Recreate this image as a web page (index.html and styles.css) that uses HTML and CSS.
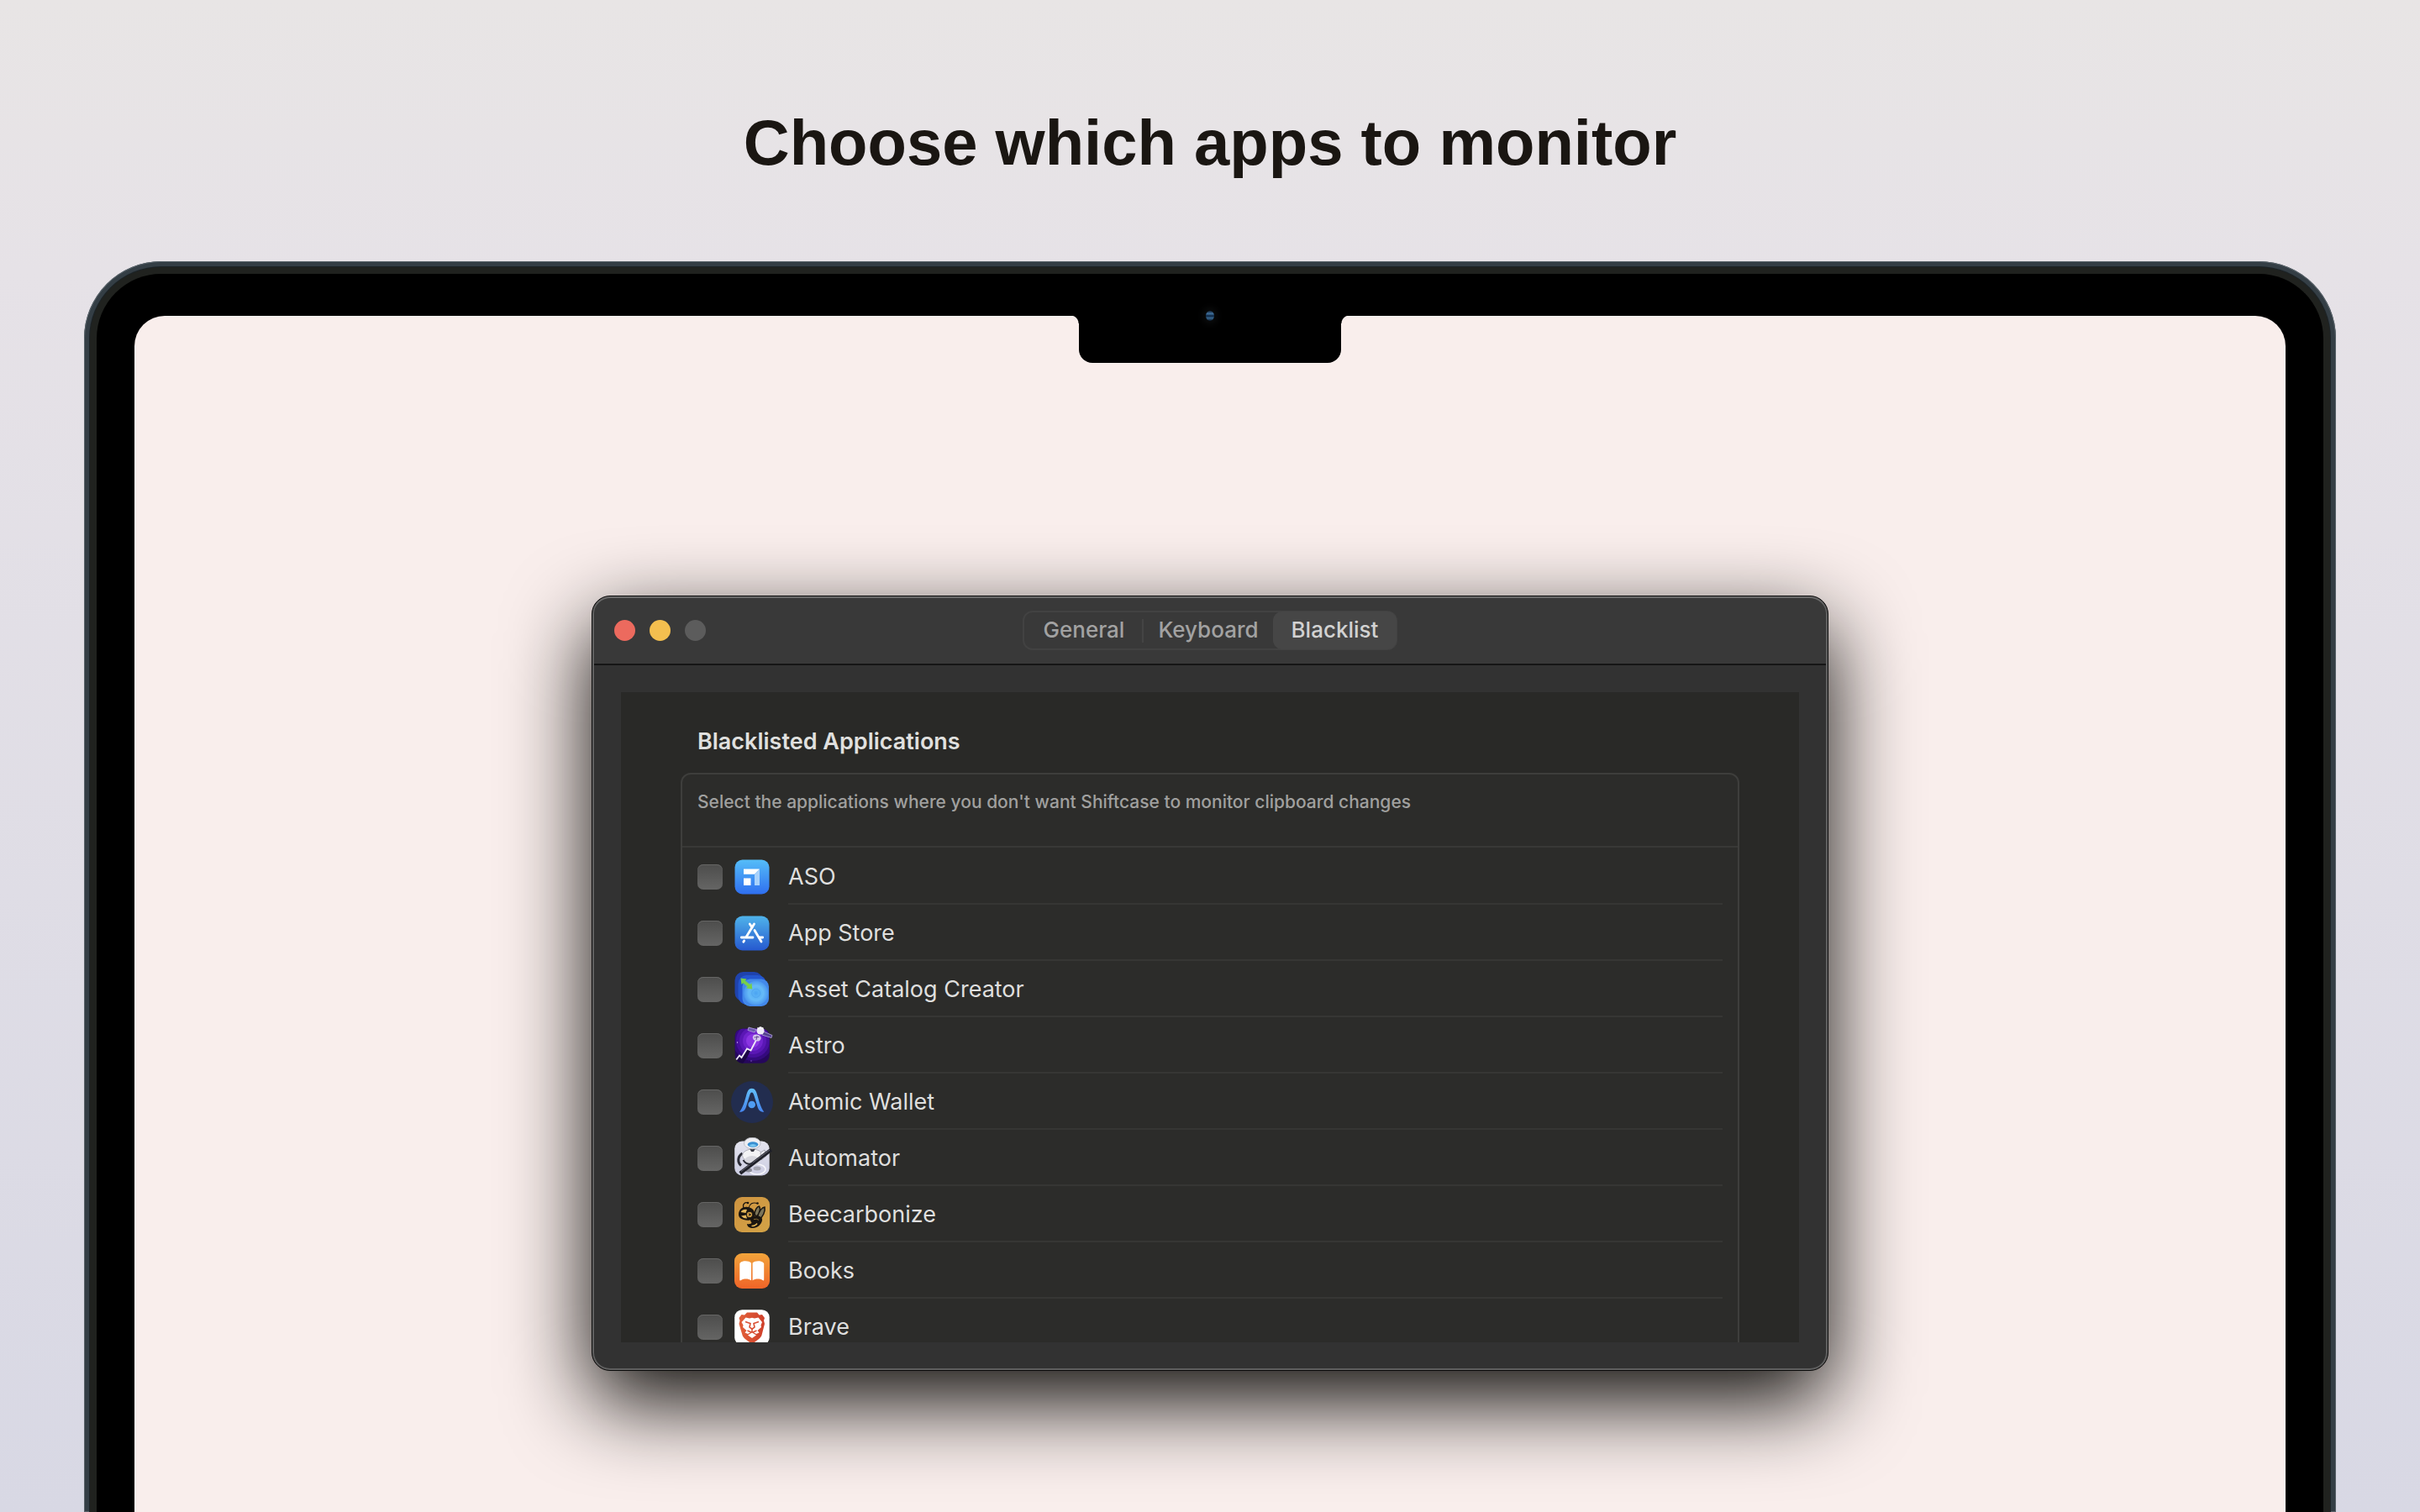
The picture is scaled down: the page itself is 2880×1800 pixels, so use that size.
FILE: index.html
```html
<!DOCTYPE html>
<html lang="en">
<head>
  <meta charset="UTF-8"/>
  <meta name="viewport" content="width=device-width, initial-scale=1.0"/>
  <title>Shiftcase - Choose which apps to monitor</title>
  <link rel="stylesheet" href="styles.css">
</head>
<body>
  <h1>Choose which apps to monitor</h1>

  <div class="laptop">
    <div class="bezel">
      <main class="screen">
        <div class="notch"><span class="camera"></span></div>

        <section class="window">
          <header class="titlebar">
            <div class="lights">
              <button class="light close" aria-label="Close"></button>
              <button class="light minimize" aria-label="Minimize"></button>
              <button class="light zoom" aria-label="Zoom" disabled></button>
            </div>
            <nav class="tabs">
              <button class="tab">General</button>
              <button class="tab">Keyboard</button>
              <button class="tab active">Blacklist</button>
            </nav>
          </header>

          <div class="content">
            <div class="scroller">
              <h2>Blacklisted Applications</h2>
              <div class="group">
                <p class="hint">Select the applications where you don't want Shiftcase to monitor clipboard changes</p>
                <ul class="apps">
                  <li>
                    <label>
                      <input type="checkbox">
                      <svg class="icon" viewBox="0 0 50 50">
                        <defs><linearGradient id="aso" x1="0" y1="0" x2="0" y2="1"><stop offset="0" stop-color="#55bdf8"/><stop offset="1" stop-color="#2f6ff0"/></linearGradient></defs>
                        <rect x="4.500" y="4.500" width="41" height="41" rx="9" fill="url(#aso)"/>
                        <path d="M15 15.500H34L28 21.800H15z" fill="#fff"/>
                        <path d="M34 15.500V35H28V21.800z" fill="#a9d2fb"/>
                        <rect x="15" y="26.500" width="8.500" height="8.500" fill="#fff"/>
                      </svg>
                      <span class="name">ASO</span>
                    </label>
                  </li>
                  <li>
                    <label>
                      <input type="checkbox">
                      <svg class="icon" viewBox="0 0 50 50">
                        <defs><linearGradient id="store" x1="0" y1="0" x2="0" y2="1"><stop offset="0" stop-color="#4fb3ea"/><stop offset="1" stop-color="#2659cf"/></linearGradient></defs>
                        <rect x="4.500" y="4.500" width="41" height="41" rx="9" fill="url(#store)"/>
                        <g stroke="#fff" stroke-width="2.800" stroke-linecap="round" fill="none">
                          <path d="M27.500 14L18 29.500"/>
                          <path d="M22.300 14L25 18"/>
                          <path d="M28 21.500L36 35"/>
                          <path d="M12.300 30H26"/>
                          <path d="M33.500 30H37.700"/>
                          <path d="M15.600 34L14.800 35.300"/>
                        </g>
                      </svg>
                      <span class="name">App Store</span>
                    </label>
                  </li>
                  <li>
                    <label>
                      <input type="checkbox">
                      <svg class="icon" viewBox="0 0 50 50">
                        <defs><radialGradient id="asset"><stop offset="0" stop-color="#4aa3f2"/><stop offset=".25" stop-color="#58b0f5"/><stop offset=".6" stop-color="#66baf7"/><stop offset="1" stop-color="#4b97ef"/></radialGradient></defs>
                        <rect x="4.500" y="4" width="33" height="35" rx="10" fill="#1f43ad"/>
                        <rect x="8.500" y="8" width="33.500" height="35" rx="10" fill="#2356cf"/>
                        <rect x="13.500" y="12.500" width="31.500" height="32.500" rx="9" fill="#4389ea"/>
                        <circle cx="29.700" cy="29.300" r="14.500" fill="url(#asset)"/>
                        <circle cx="29.700" cy="29.300" r="5" fill="none" stroke="#4a9fee" stroke-width=".7"/>
                        <path d="M11.500 11.500L18.500 12.500L17 14.500L22.500 19L24.500 17.500L25.300 24.500L18 23.500L19.800 21.800L14.500 17.200L12.500 19z" fill="#77cf4a"/>
                      </svg>
                      <span class="name">Asset Catalog Creator</span>
                    </label>
                  </li>
                  <li>
                    <label>
                      <input type="checkbox">
                      <svg class="icon" viewBox="0 0 50 50">
                        <defs><clipPath id="astro"><rect x="4.700" y="4.700" width="41" height="41" rx="9"/></clipPath></defs>
                        <g clip-path="url(#astro)">
                          <rect x="4" y="4" width="42" height="42" fill="#26075c"/>
                          <circle cx="26" cy="19" r="24" fill="#340a7d"/>
                          <circle cx="26" cy="19" r="20" fill="#470f9c"/>
                          <circle cx="26" cy="19" r="16" fill="#5a17b5"/>
                          <circle cx="26" cy="19" r="12" fill="#7023cc"/>
                          <circle cx="26" cy="19" r="8" fill="#8b35e2"/>
                          <path d="M5 46V42L10 36L13 39L19 29L23 31L19 39L14 46z" fill="#1b0545"/>
                        </g>
                        <circle cx="7.500" cy="21" r=".7" fill="#d9c8ff"/>
                        <circle cx="24" cy="43" r=".7" fill="#8d6ad0"/>
                        <path d="M6.300 41.500L10 36.500L12.500 39L19 28.500L23.500 30.500L29.500 19" fill="none" stroke="#efe9f8" stroke-width="1.800"/>
                        <ellipse cx="30.700" cy="15.500" rx="5" ry="4" fill="#d5c6ee" transform="rotate(15 30.700 15.500)"/>
                        <path d="M27.500 15L33.500 14.500M30 18L31 13" stroke="#6a4b98" fill="none"/>
                        <path d="M21 3L30 5.500L28 9L20 6.500z" fill="#6c59ad" stroke="#b5a7dd" stroke-width=".8"/>
                        <path d="M37.500 7.500L49 12.500L48 15.500L37 12z" fill="#54418e" stroke="#b5a7dd" stroke-width=".8"/>
                        <circle cx="35" cy="7" r="4.600" fill="#efebf8"/>
                        <path d="M31.500 3.500L33 5M35 2V5M38 3L37 5" stroke="#fff"/>
                      </svg>
                      <span class="name">Astro</span>
                    </label>
                  </li>
                  <li>
                    <label>
                      <input type="checkbox">
                      <svg class="icon" viewBox="0 0 50 50">
                        <defs><linearGradient id="atomic" x1="0" y1="0" x2="0" y2="1"><stop offset="0" stop-color="#63bff8"/><stop offset="1" stop-color="#4685ee"/></linearGradient></defs>
                        <circle cx="25" cy="25" r="25" fill="#222d4f"/>
                        <path d="M10 36.800C14.500 31 16 24 18 17.500C19.500 12 21 8.800 24.700 8.800C28.400 8.800 30 12 31.500 17.500C33.500 24 35 31 39.300 36.800C34.500 37 32.800 34.500 31.500 30.500L27.500 17.500C26.600 14.700 26 13.500 24.700 13.500C23.400 13.500 22.800 14.700 22 17.500L18 30.500C16.700 34.500 15 37 10 36.800z" fill="url(#atomic)"/>
                        <circle cx="24.700" cy="28" r="4.300" fill="#4f9cf2"/>
                      </svg>
                      <span class="name">Atomic Wallet</span>
                    </label>
                  </li>
                  <li>
                    <label>
                      <input type="checkbox">
                      <svg class="icon" viewBox="0 0 50 50">
                        <defs><linearGradient id="robot" x1="0" y1="0" x2="0" y2="1"><stop offset="0" stop-color="#e4e4ee"/><stop offset="1" stop-color="#cccde2"/></linearGradient></defs>
                        <rect x="4.200" y="4.500" width="41.500" height="41" rx="9" fill="url(#robot)"/>
                        <ellipse cx="31" cy="38" rx="10" ry="6" fill="none" stroke="#f6f6fb" stroke-width="1.500"/>
                        <path d="M13.500 19C7.500 23 7.500 30 12 33.500" fill="none" stroke="#2b2c36" stroke-width="3"/>
                        <ellipse cx="25.500" cy="21.500" rx="12" ry="7.500" fill="#f3f3f5" stroke="#a6a6b0" stroke-width=".8"/>
                        <ellipse cx="25" cy="28" rx="9" ry="6" fill="#d7d7de"/>
                        <path d="M22 13H29L27 17H24z" fill="#3a3b45"/>
                        <ellipse cx="25.300" cy="7" rx="9.800" ry="6.800" fill="#eeeef2" stroke="#b3b4bd" stroke-width=".8"/>
                        <ellipse cx="26" cy="8.500" rx="6.300" ry="3.300" fill="#388fd2"/>
                        <path d="M21.500 9.500Q26 6.500 30.500 9.500Q26 12.500 21.500 9.500z" fill="#79c8f2"/>
                        <path d="M35 18L40 15L42 22L36 27z" fill="#e9e9ef" stroke="#8c8d98" stroke-width=".7"/>
                        <ellipse cx="21" cy="39" rx="4" ry="2.500" fill="#8c8d98"/>
                        <ellipse cx="31" cy="37" rx="4.500" ry="2.500" fill="#a5a6b1"/>
                        <path d="M9.500 41L46.500 13L49 16.500L12 44.500z" fill="#1f2028"/>
                        <path d="M12 40.500L46 15" stroke="#7d7e8c" stroke-width=".8"/>
                        <path d="M14.500 27C17 31 21 33 26 31" fill="none" stroke="#2b2c36" stroke-width="2"/>
                      </svg>
                      <span class="name">Automator</span>
                    </label>
                  </li>
                  <li>
                    <label>
                      <input type="checkbox">
                      <svg class="icon" viewBox="0 0 50 50">
                        <defs><linearGradient id="bee" x1="0" y1="0" x2="1" y2="1"><stop offset="0" stop-color="#cf9440"/><stop offset="1" stop-color="#d3a347"/></linearGradient></defs>
                        <rect x="4" y="4" width="42" height="42" rx="9" fill="url(#bee)"/>
                        <path d="M15 17C13 12 17 10 20 11M21 17C22 12 26 10 31 11.500" fill="none" stroke="#1a1510" stroke-width="1.200"/>
                        <circle cx="20" cy="11" r="1.300" fill="#1a1510"/>
                        <circle cx="31.500" cy="11.500" r="1.300" fill="#1a1510"/>
                        <path d="M28 25C28 20 31 15 33.500 15C35.500 18 33.500 23 31 27zM31.500 28C33 21 37 16 40 16C41 21 38 28 33 31z" fill="#7c7559" stroke="#1a1510" stroke-width="1.500"/>
                        <path d="M9 25C9 18 15 15 20 16C26 17 29 21 28 26C27 31 21 33 15 31C11 30 9 28 9 25z" fill="#1a1510"/>
                        <path d="M11.500 22Q14 18 19 19L17.500 23z" fill="#e1b65a"/>
                        <path d="M12 26.500L18 25.500L19 29.500Q15 30 12 26.500z" fill="#e1b65a"/>
                        <circle cx="22" cy="25" r="3.800" fill="#c99a43" stroke="#1a1510"/>
                        <path d="M21 23.800L23.500 25L21 26.200" fill="none" stroke="#1a1510"/>
                        <path d="M25 27C31 25 38 27 37 32C36 37 31 41 26 41C22 41 19 39 19 36C22 36.500 24 36 24.500 34.500C23 33 22 30 25 27z" fill="#1a1510"/>
                        <path d="M24.500 38.500Q29 38.500 31 35.500" fill="none" stroke="#dcae50" stroke-width="1.600"/>
                        <path d="M27 30.500Q31 29.500 33 31.500" fill="none" stroke="#8a6c33"/>
                      </svg>
                      <span class="name">Beecarbonize</span>
                    </label>
                  </li>
                  <li>
                    <label>
                      <input type="checkbox">
                      <svg class="icon" viewBox="0 0 50 50">
                        <defs><linearGradient id="books" x1="0" y1="0" x2="0" y2="1"><stop offset="0" stop-color="#f2a43b"/><stop offset="1" stop-color="#ef6428"/></linearGradient></defs>
                        <rect x="4" y="4" width="42" height="42" rx="9" fill="url(#books)"/>
                        <path d="M24 15.500C21 12.700 14 12.700 11 15.200C10.500 15.600 10.300 16 10.300 16.600V35.500C10.300 36.500 11 36.700 12 36C15.500 34 20.500 34 24 36.300z" fill="#fff"/>
                        <path d="M25.600 15.500C28.600 12.700 35.600 12.700 38.400 15.200C38.900 15.600 39.200 16 39.200 16.600V35.500C39.200 36.500 38.500 36.700 37.600 36C34 34 29 34 25.600 36.300z" fill="#fff"/>
                      </svg>
                      <span class="name">Books</span>
                    </label>
                  </li>
                  <li>
                    <label>
                      <input type="checkbox">
                      <svg class="icon" viewBox="0 0 50 50">
                        <defs><linearGradient id="brave" x1="0" y1="0" x2="1" y2="0"><stop offset="0" stop-color="#e2603a"/><stop offset="1" stop-color="#cf402b"/></linearGradient></defs>
                        <rect x="4.200" y="4.200" width="41.500" height="42" rx="9" fill="#fff"/>
                        <path d="M19 7.500H31L33.500 10.500L37 10L40 14L39 17L40 21L36.500 34.500C35.500 37.500 33 39.500 25 45C17 39.500 14.500 37.500 13.500 34.500L9.500 21L10.500 17L9.500 14L12.500 10L16 10.500z" fill="url(#brave)"/>
                        <path d="M17.500 13.500L22 14.500L25 13.700L28 14.500L32.500 13.500L37 19L35.500 22.500L36 25L31.500 29L33.500 31.500L30 33L25 30L20 33L16.500 31.500L18.500 29L14 25L14.500 22.500L12.500 19z" fill="#fff"/>
                        <path d="M17 18.500L23 20.500L22 25L25 27.200L28 25L27 20.500L33 18.500" fill="none" stroke="#d94f33" stroke-width="1.600"/>
                        <path d="M25 27V30.500M19.500 29L25 31.500L30.500 29" fill="none" stroke="#d94f33" stroke-width="1.500"/>
                        <path d="M25 31.500L30 34.500L25 38L20 34.500z" fill="#fff"/>
                      </svg>
                      <span class="name">Brave</span>
                    </label>
                  </li>
                </ul>
              </div>
            </div>
          </div>
        </section>
      </main>
    </div>
  </div>
</body>
</html>
```
FILE: styles.css
```css
* { box-sizing: border-box; }
body { margin: 0; height: 100vh; overflow: hidden; display: flex; flex-direction: column;
  font-family: Inter, "Liberation Sans", sans-serif;
  background: linear-gradient(#e8e5e5, #e6e2e7 18%, #d8d8e4); }
h1 { margin: 0; padding: 126px 0 97px; text-align: center; color: #1a1612;
  font: bold 76px/88px "Liberation Sans", Arial, sans-serif; }

/* laptop */
.laptop { flex: 1; margin: 0 100px; padding: 7px 7px 0; background: #343e45; border-radius: 92px 92px 0 0;
  box-shadow: inset 0 0 0 1px #59636a; }
.bezel { height: 100%; padding: 50px 45px 0; background: #000; border: 8px solid #20221f; border-bottom: 0;
  border-radius: 85px 85px 0 0; box-shadow: 0 0 0 1px #1c2327; }
.screen { position: relative; height: 100%; padding-top: 333px; background: #f9eeec; border-radius: 36px 36px 0 0; }
.notch { position: absolute; top: -1px; left: 50%; width: 312px; height: 57px; transform: translateX(-50%);
  background: #000; border-radius: 0 0 16px 16px; }
.notch::before, .notch::after { content: ""; position: absolute; top: 0; width: 10px; height: 10px; }
.notch::before { right: 100%; background: radial-gradient(circle at 0 100%, transparent 9px, #000 10px); }
.notch::after { left: 100%; background: radial-gradient(circle at 100% 100%, transparent 9px, #000 10px); }
.camera { display: block; width: 10px; height: 12px; margin: -5px auto 0; border-radius: 50%;
  background: linear-gradient(#14263c, #41709c 30%, #0b2340 50%, #37658f 72%, #0c1a2b);
  box-shadow: 0 0 8px 4px #0c0d0e; }

/* settings window */
.window { width: 57.5%; margin: 0 auto; background: #323232; border: 1px solid #0b0b0b; border-radius: 22px;
  box-shadow: inset 0 0 0 2px #5f5f5f, 0 36px 100px #0c0b08; }
.titlebar { display: grid; grid-template-columns: 1fr auto 1fr; align-items: center; height: 82px; margin: 0 2px;
  padding: 0 24px 2px; background: #393939; border-bottom: 2px solid #151515; border-top: 2px solid #6b6b6b;
  border-radius: 20px 20px 0 0; }
.lights { display: flex; gap: 17px; }
.light { width: 25px; height: 25px; padding: 0; border: 0; border-radius: 50%; }
.close { background: #ec6a5e; }
.minimize { background: #f4bf4f; }
.zoom { background: #5c5c5c; }
.tabs { display: flex; border: 2px solid #424242; border-radius: 12px; }
.tab { position: relative; height: 43px; padding: 0 23px; border: 0; background: none; color: #a2a2a2;
  font: 500 26px/40px Inter, sans-serif; }
.tab + .tab { padding: 0 17px; }
.tab:first-child::after { content: ""; position: absolute; right: 0; top: 8px; width: 2px; height: 28px; background: #444; }
.tab.active { margin: -1px -1px -1px 0; height: 45px; padding: 0 22px; background: #464646; border-radius: 11px; color: #d2d2d2; }

.content { padding: 32px 34px 33px; }
.scroller { height: 43vh; overflow: hidden; padding: 43px 71px 0; background: #292927; }
h2 { margin: 0; padding: 0 20px 21px; color: #e0e0df; font-size: 27px; line-height: 32px; font-weight: 600; }
.group { background: #2c2c2a; border: 2px solid #3e3e3c; border-radius: 12px; }
.hint { margin: 0; padding: 19px 18px 38px; border-bottom: 2px solid #383836; color: #a0a09f;
  font-size: 21px; line-height: 28px; font-weight: 500; }
.apps { margin: 0; padding: 1px 18px 0; list-style: none; }
.apps label { display: flex; align-items: center; height: 67px; }
.apps input { appearance: none; flex: none; width: 30px; height: 30px; margin: 0 10px 0 0; border-radius: 7px;
  background: linear-gradient(#4d4d4c, #656564); box-shadow: inset 0 1px 0 #666665; }
.icon { flex: none; width: 50px; height: 50px; margin-right: 18px; }
.name { flex: 1; height: 67px; border-bottom: 2px solid #363634; color: #dfdfde; font-size: 27px; line-height: 68px; }
```
